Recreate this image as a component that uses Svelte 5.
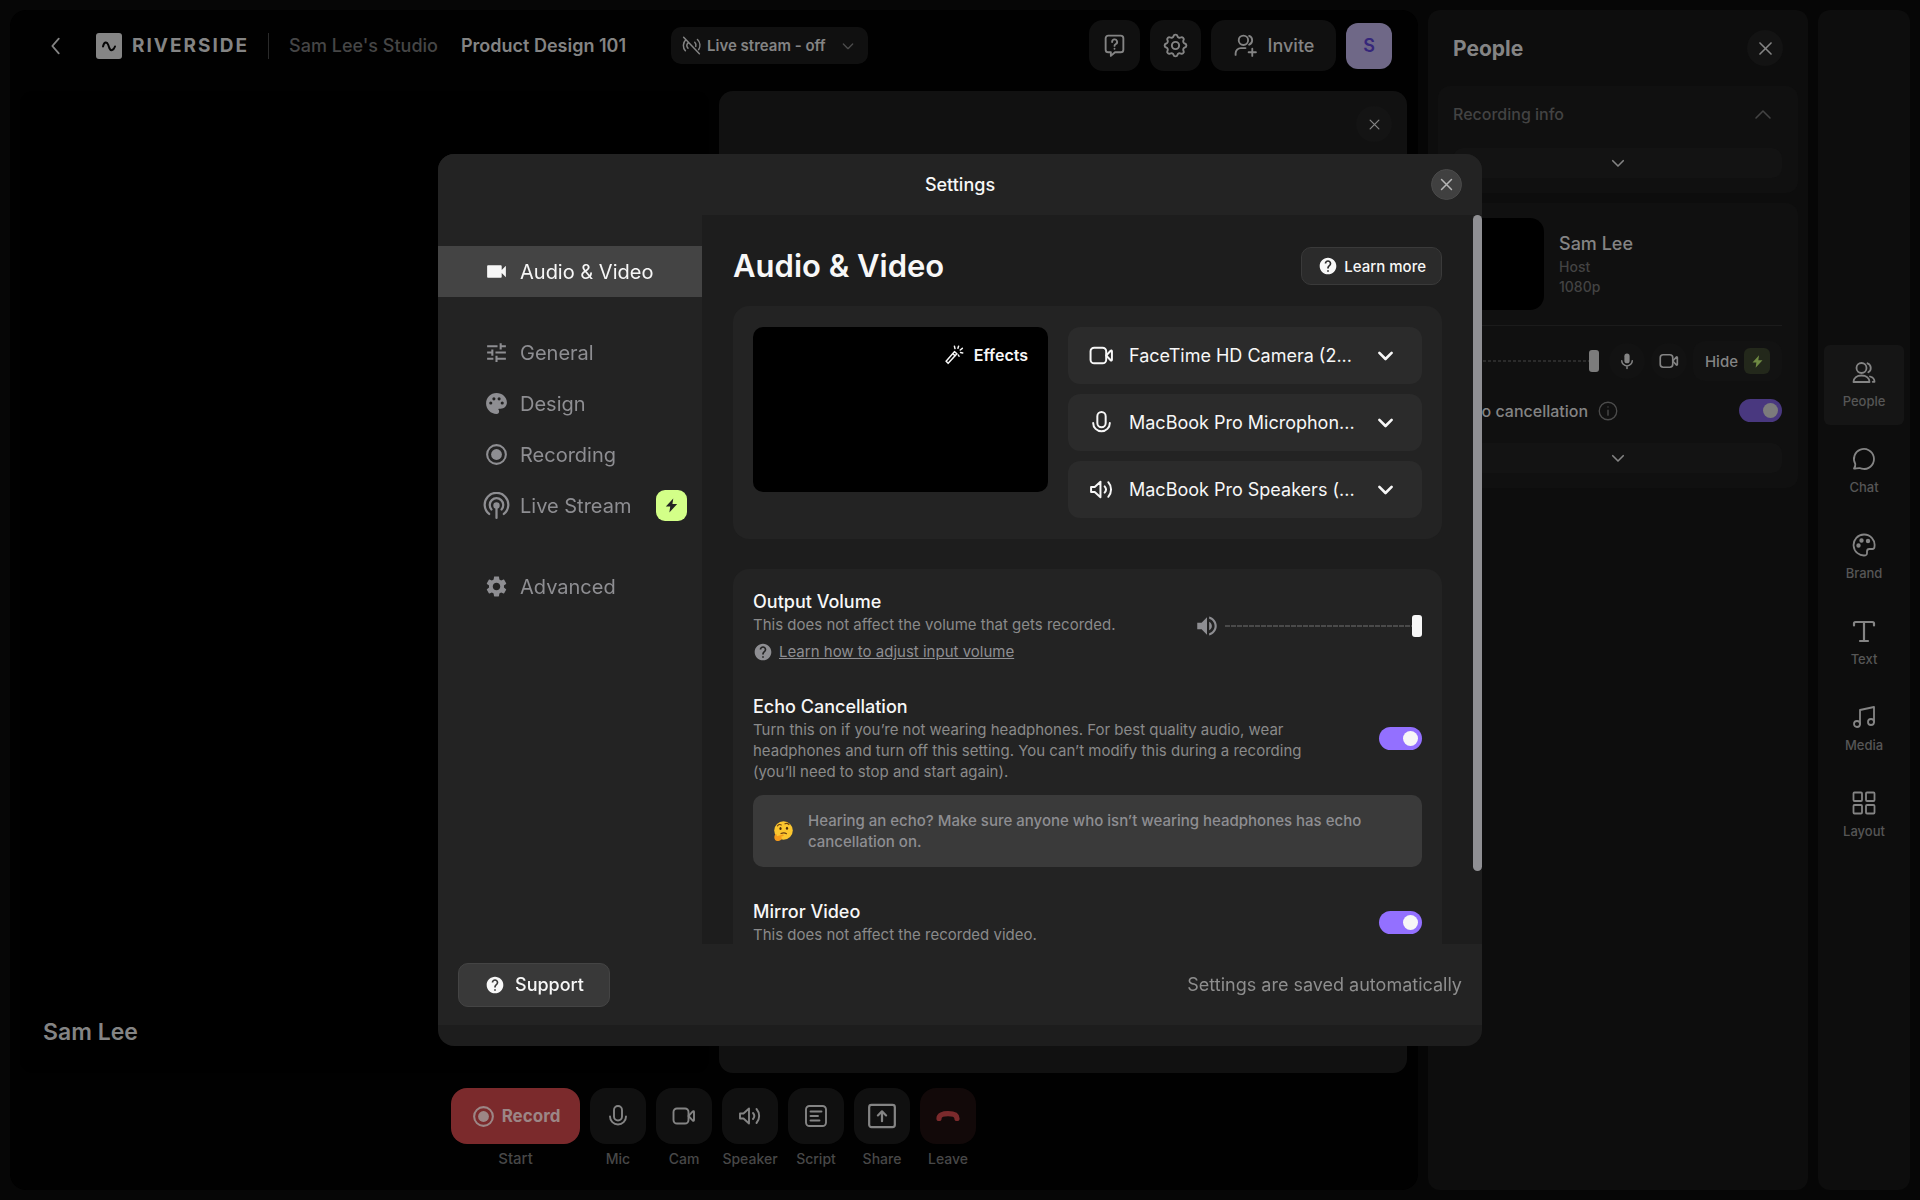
<script lang="ts">
    type NavItem = { icon: string; label: string; pro?: boolean };
    type Device = { icon: string; label: string; value: string };

    // Filled glyphs, 24px grid
    const solid: Record<string, string> = {
        videocam: `<path d="M17 10.5V7c0-.55-.45-1-1-1H4c-.55 0-1 .45-1 1v10c0 .55.45 1 1 1h12c.55 0 1-.45 1-1v-3.5l4 4v-11l-4 4z"/>`,
        tune: `<path d="M3 17v2h6v-2H3zM3 5v2h10V5H3zm10 16v-2h8v-2h-8v-2h-2v6h2zM7 9v2H3v2h4v2h2V9H7zm14 4v-2H11v2h10zm-6-4h2V7h4V5h-4V3h-2v6z"/>`,
        palette: `<path d="M12 2C6.49 2 2 6.49 2 12s4.49 10 10 10a2.5 2.5 0 0 0 2.5-2.5c0-.61-.23-1.2-.64-1.67a.53.53 0 0 1-.13-.33c0-.28.22-.5.5-.5H16c3.31 0 6-2.69 6-6 0-4.96-4.49-9-10-9zm-5.500 11a1.500 1.500 0 1 1 0-3 1.500 1.500 0 0 1 0 3zm3-4a1.500 1.500 0 1 1 0-3 1.500 1.500 0 0 1 0 3zm5 0a1.500 1.500 0 1 1 0-3 1.500 1.500 0 0 1 0 3zm3 4a1.500 1.500 0 1 1 0-3 1.500 1.500 0 0 1 0 3z"/>`,
        record: `<circle cx="12" cy="12" r="5.200"/><circle cx="12" cy="12" r="9" fill="none" stroke="currentColor" stroke-width="2"/>`,
        gear: `<path d="M19.14 12.94c.04-.3.06-.61.06-.94 0-.32-.02-.64-.07-.94l2.03-1.58c.18-.14.23-.41.12-.61l-1.92-3.32c-.12-.22-.37-.29-.59-.22l-2.39.96c-.5-.38-1.03-.7-1.62-.94l-.36-2.54c-.04-.24-.24-.41-.48-.41h-3.84c-.24 0-.43.17-.47.41l-.36 2.54c-.59.24-1.13.57-1.62.94l-2.39-.96c-.22-.08-.47 0-.59.22L2.74 8.87c-.12.21-.08.47.12.61l2.03 1.58c-.05.3-.09.63-.09.94s.02.64.07.94l-2.03 1.58c-.18.14-.23.41-.12.61l1.92 3.32c.12.22.37.29.59.22l2.39-.96c.5.38 1.03.7 1.62.94l.36 2.54c.05.24.24.41.48.41h3.84c.24 0 .44-.17.47-.41l.36-2.54c.59-.24 1.13-.56 1.62-.94l2.39.96c.22.08.47 0 .59-.22l1.92-3.32c.12-.22.07-.47-.12-.61l-2.01-1.58zM12 15.600c-1.980 0-3.600-1.620-3.600-3.600s1.620-3.600 3.600-3.600 3.600 1.620 3.600 3.600-1.620 3.600-3.600 3.600z"/>`,
        help: `<path d="M12 2C6.48 2 2 6.48 2 12s4.48 10 10 10 10-4.48 10-10S17.52 2 12 2zm1 17h-2v-2h2v2zm2.07-7.75l-.9.92C13.45 12.9 13 13.5 13 15h-2v-.5c0-1.1.45-2.1 1.17-2.83l1.24-1.26c.37-.36.59-.86.59-1.41 0-1.1-.9-2-2-2s-2 .9-2 2H8c0-2.21 1.79-4 4-4s4 1.79 4 4c0 .88-.36 1.68-.93 2.25z"/>`,
        volume: `<path d="M3 9v6h4l5 5V4L7 9H3zm13.500 3c0-1.770-1.020-3.290-2.500-4.030v8.050c1.480-.73 2.500-2.250 2.500-4.020zM14 3.230v2.060c2.890.86 5 3.540 5 6.710s-2.110 5.850-5 6.710v2.060c4.010-.91 7-4.490 7-8.770s-2.990-7.860-7-8.770z"/>`,
        bolt: `<path d="M14.500 2 4 13.500h6.200L9 22l11-12h-6.700z"/>`,
        micSolid: `<rect x="8.500" y="2" width="7" height="13" rx="3.500"/><path d="M5 11.500a7 7 0 0 0 14 0M12 18.500V22" fill="none" stroke="currentColor" stroke-width="2" stroke-linecap="round"/>`,
        hangup: `<path d="M3 14.500c0-3.200 3.800-4.800 9-4.800s9 1.600 9 4.800" fill="none" stroke="currentColor" stroke-width="5.200" stroke-linecap="round"/>`,
    };

    // Outlined glyphs, 24px grid
    const outline: Record<string, string> = {
        back: `<path d="m15 4-7 8 7 8"/>`,
        down: `<path d="m5 9 7 7 7-7"/>`,
        up: `<path d="m5 16 7-7 7 7"/>`,
        close: `<path d="m5 5 14 14M19 5 5 19"/>`,
        liveOff: `<path d="M3 2.500 21 21.500M5.500 5.500a9 9 0 0 0-.5 12.500M8.300 8.500a5 5 0 0 0-.3 6.700M18.800 5.200a9.200 9.200 0 0 1 1.400 11.500M15.700 8.200a5 5 0 0 1 1.200 4.800"/>`,
        ask: `<path d="M6 2.500h12A2.500 2.500 0 0 1 20.500 5v11a2.500 2.500 0 0 1-2.500 2.500h-5.500L8.500 22v-3.500H6A2.500 2.500 0 0 1 3.500 16V5A2.500 2.500 0 0 1 6 2.500z"/><path d="M9.700 8.600a2.400 2.400 0 1 1 3.600 2c-.8.500-1.300.9-1.300 1.800M12 15v.2"/>`,
        cog: `<path d="M10.325 4.317c.426-1.756 2.924-1.756 3.350 0a1.724 1.724 0 0 0 2.573 1.066c1.543-.94 3.310.826 2.370 2.370a1.724 1.724 0 0 0 1.065 2.572c1.756.426 1.756 2.924 0 3.350a1.724 1.724 0 0 0-1.066 2.573c.94 1.543-.826 3.310-2.370 2.370a1.724 1.724 0 0 0-2.572 1.065c-.426 1.756-2.924 1.756-3.350 0a1.724 1.724 0 0 0-2.573-1.066c-1.543.94-3.310-.826-2.370-2.370a1.724 1.724 0 0 0-1.065-2.572c-1.756-.426-1.756-2.924 0-3.350a1.724 1.724 0 0 0 1.066-2.573c-.94-1.543.826-3.310 2.370-2.370 1 .608 2.296.070 2.572-1.065z"/><circle cx="12" cy="12" r="3"/>`,
        invite: `<circle cx="10" cy="7" r="4.500"/><path d="M2.500 21v-1.500a5 5 0 0 1 5-5H12M15.500 2.800a4.500 4.500 0 0 1 0 8.400M18.500 15v7M15 18.500h7"/>`,
        mic: `<rect x="8" y="2" width="8" height="14.500" rx="4"/><path d="M4 12.500a8 8 0 0 0 16 0"/>`,
        camera: `<rect x="1.500" y="4.500" width="15" height="15" rx="3.500"/><path d="m16.500 12 4.300-4.600c.5-.5 1.200-.2 1.200.5v8.200c0 .7-.7 1-1.200.5z"/>`,
        speaker: `<path d="M2 9.500h3.500L11 4.500v15l-5.500-5H2zM15 9a4.500 4.500 0 0 1 0 6M18.500 5a10.500 10.500 0 0 1 0 14"/>`,
        script: `<rect x="2" y="2" width="20" height="20" rx="3.500"/><path d="M6.500 7.500h11M6.500 12h7.500M6.500 16.500h9"/>`,
        share: `<rect x="1" y="2.500" width="22" height="19" rx="2"/><path d="M12 16.500v-8M8.500 11.500 12 8l3.500 3.500"/>`,
        info: `<circle cx="12" cy="12" r="10.500"/><path d="M12 11v6M12 7v.3"/>`,
        people: `<circle cx="9.500" cy="7" r="5"/><path d="M1.500 21c0-4 3.500-6.500 8-6.500s8 2.500 8 6.500zM15.500 2.300a5 5 0 0 1 .8 9M18 15.500c2.800.7 4.500 2.500 4.500 5.300h-1.800"/>`,
        chat: `<path d="M2 21.500c1-1.500 1.500-3 1.300-4.500A10 10 0 1 1 12.500 22c-1.800 0-3-.6-4.500-.8-2-.2-4 .3-6 .3z"/>`,
        brand: `<path d="M12 1.500a10.500 10.500 0 1 0 1.500 20.900c1.600-.2 1.500-1.500 1.500-2.400v-1.500c0-1.500.8-2.500 2.300-2.500h3c1.300 0 2.200-.6 2.200-2.500a10.500 10.500 0 0 0-10.500-12z"/><g fill="currentColor"><circle cx="6.500" cy="12.500" r="1.300"/><circle cx="9.500" cy="7.500" r="1.300"/><circle cx="16" cy="8" r="1.300"/></g>`,
        text: `<path d="M2 6.500V4.500A1.500 1.500 0 0 1 3.500 3h17A1.500 1.500 0 0 1 22 4.500v2M12 3v19M8 22h8" stroke-width="2.200"/>`,
        media: `<path d="M8 19V5l14-3v15"/><circle cx="5" cy="19" r="3"/><circle cx="19" cy="17" r="3"/>`,
        layout: `<rect x="1.500" y="1.500" width="8.500" height="8.500" rx="1"/><rect x="14" y="1.500" width="8.500" height="8.500" rx="1"/><rect x="1.500" y="14" width="8.500" height="8.500" rx="1"/><rect x="14" y="14" width="8.500" height="8.500" rx="1"/>`,
        wand: `<path d="m2.500 19.500 10-11.500 3 2.500-10.500 11.500zM10.500 10.300l3 2.700M12.500 1.500l.7 2.800M17.500 1.500 16.700 4M22 4l-2.500 2M22.500 9.500 19.800 9M18 13.500l-.8-1.500"/>`,
        live: `<g stroke-width="2"><path d="M5.500 19.500a10.500 10.500 0 1 1 13 0M7.500 15.500a6 6 0 1 1 9 0M12 12.500V23"/></g><circle cx="12" cy="12" r="2" fill="currentColor"/>`,
    };

    const navGroups: NavItem[][] = [
        [{ icon: "videocam", label: "Audio & Video" }],
        [
            { icon: "tune", label: "General" },
            { icon: "palette", label: "Design" },
            { icon: "record", label: "Recording" },
            { icon: "live", label: "Live Stream", pro: true },
        ],
        [{ icon: "gear", label: "Advanced" }],
    ];

    const devices: Device[] = [
        { icon: "camera", label: "Camera", value: "FaceTime HD Camera (2..." },
        { icon: "mic", label: "Microphone", value: "MacBook Pro Microphon..." },
        { icon: "speaker", label: "Speaker", value: "MacBook Pro Speakers (..." },
    ];

    const controls = [
        { icon: "mic", label: "Mic" },
        { icon: "camera", label: "Cam" },
        { icon: "speaker", label: "Speaker" },
        { icon: "script", label: "Script" },
        { icon: "share", label: "Share" },
        { icon: "hangup", label: "Leave" },
    ];

    const tabs = [
        { icon: "people", label: "People" },
        { icon: "chat", label: "Chat" },
        { icon: "brand", label: "Brand" },
        { icon: "text", label: "Text" },
        { icon: "media", label: "Media" },
        { icon: "layout", label: "Layout" },
    ];

    let activeNav = $state("Audio & Video");
    let activeTab = $state("People");
    let volume = $state(100);
    let guestVolume = $state(100);
    let echo = $state(true);
    let mirror = $state(true);
    let guestEcho = $state(true);
</script>

{#snippet icon(name: string, size: number, weight = 1.7)}
    {#if solid[name]}
        <svg class="icon" width={size} height={size} viewBox="0 0 24 24" fill="currentColor" aria-hidden="true">
            {@html solid[name]}
        </svg>
    {:else}
        <svg
            class="icon"
            width={size}
            height={size}
            viewBox="0 0 24 24"
            fill="none"
            stroke="currentColor"
            stroke-width={weight}
            stroke-linecap="round"
            stroke-linejoin="round"
            aria-hidden="true"
        >
            {@html outline[name]}
        </svg>
    {/if}
{/snippet}

<div class="app">
    <main class="stage">
        <header class="topbar">
            <button class="back" aria-label="Back">{@render icon("back", 22, 2)}</button>
            <a class="brand" href="#home">
                <svg width="26" height="26" viewBox="0 0 26 26" aria-hidden="true">
                    <rect width="26" height="26" rx="3" fill="#858585" />
                    <path d="M7 13.500c1-4.500 3.800-5.500 5.300-1.500l1 3c1.500 3.500 4.200 2.500 5.700-1.500" fill="none" stroke="#050505" stroke-width="2" stroke-linecap="round" />
                </svg>
                <span class="brand-name">RIVERSIDE</span>
            </a>
            <span class="rule"></span>
            <a class="crumb" href="#studio">Sam Lee's Studio</a>
            <span class="session">Product Design 101</span>
            <button class="live-pill">
                {@render icon("liveOff", 21)}
                <span>Live stream - off</span>
                <span class="live-arrow">{@render icon("down", 16, 2)}</span>
            </button>
            <div class="top-actions">
                <button class="tile-btn" aria-label="Help">{@render icon("ask", 25, 1.8)}</button>
                <button class="tile-btn" aria-label="Settings">{@render icon("cog", 29, 1.6)}</button>
                <button class="tile-btn invite">
                    {@render icon("invite", 25, 1.8)}
                    <span>Invite</span>
                </button>
                <button class="avatar">S</button>
            </div>
        </header>

        <div class="videos">
            <div class="video video-self">
                <span class="video-name">Sam Lee</span>
            </div>
            <div class="video video-empty">
                <button class="video-close" aria-label="Close">{@render icon("close", 15, 2)}</button>
            </div>
        </div>

        <footer class="controls">
            <div class="control">
                <button class="record">
                    {@render icon("record", 25)}
                    <span>Record</span>
                </button>
                <span class="control-label start">Start</span>
            </div>
            {#each controls as c}
                <div class="control">
                    <button class="control-btn" class:leave={c.icon === "hangup"} aria-label={c.label}>
                        {@render icon(c.icon, c.icon === "share" ? 28 : 24, 1.9)}
                    </button>
                    <span class="control-label">{c.label}</span>
                </div>
            {/each}
        </footer>
    </main>

    <aside class="people">
        <header class="people-head">
            <h2>People</h2>
            <button class="people-close" aria-label="Close panel">{@render icon("close", 19, 2)}</button>
        </header>
        <section class="people-card info-card">
            <div class="info-head">
                <span>Recording info</span>
                {@render icon("up", 24, 1.6)}
            </div>
            <button class="expand" aria-label="Expand info">{@render icon("down", 18, 2.2)}</button>
        </section>
        <section class="people-card">
            <div class="person">
                <div class="person-thumb"></div>
                <div class="person-text">
                    <strong>Sam Lee</strong>
                    <span>Host</span>
                    <span>1080p</span>
                </div>
            </div>
            <div class="person-controls">
                <input class="range dim" type="range" aria-label="Guest volume" bind:value={guestVolume} />
                <button class="round" aria-label="Mute">{@render icon("micSolid", 18)}</button>
                <button class="round" aria-label="Stop video">{@render icon("camera", 20, 2)}</button>
                <button class="hide-btn">
                    <span>Hide</span>
                    <span class="hide-badge">{@render icon("bolt", 15)}</span>
                </button>
            </div>
            <div class="person-echo">
                <label for="guest-echo">Echo cancellation</label>
                {@render icon("info", 20, 1.6)}
                <input id="guest-echo" class="toggle dim" type="checkbox" bind:checked={guestEcho} />
            </div>
            <button class="expand" aria-label="Expand guest">{@render icon("down", 18, 2.2)}</button>
        </section>
    </aside>

    <nav class="rail">
        {#each tabs as t}
            <button class="rail-item" class:active={activeTab === t.label} onclick={() => (activeTab = t.label)}>
                {@render icon(t.icon, 24, 1.8)}
                <span>{t.label}</span>
            </button>
        {/each}
    </nav>
</div>

<div class="overlay">
    <div class="modal" role="dialog" aria-labelledby="modal-title">
        <header class="modal-head">
            <h1 id="modal-title">Settings</h1>
            <button class="modal-close" aria-label="Close settings">{@render icon("close", 17, 2.2)}</button>
        </header>

        <div class="modal-body">
            <nav class="side">
                {#each navGroups as group}
                    <div class="side-group">
                        {#each group as item}
                            <button class="side-item" class:active={activeNav === item.label} onclick={() => (activeNav = item.label)}>
                                <span class="side-icon">{@render icon(item.icon, item.icon === "live" ? 27 : 25)}</span>
                                <span>{item.label}</span>
                                {#if item.pro}
                                    <span class="pro">{@render icon("bolt", 17)}</span>
                                {/if}
                            </button>
                        {/each}
                    </div>
                {/each}
            </nav>

            <div class="content">
                <div class="content-head">
                    <h2>Audio &amp; Video</h2>
                    <button class="learn">
                        {@render icon("help", 20)}
                        <span>Learn more</span>
                    </button>
                </div>

                <section class="card devices">
                    <div class="preview">
                        <button class="effects">
                            {@render icon("wand", 20, 1.8)}
                            <span>Effects</span>
                        </button>
                    </div>
                    <div class="device-list">
                        {#each devices as d}
                            <label class="device">
                                {@render icon(d.icon, 25, 1.9)}
                                <select aria-label={d.label}>
                                    <option>{d.value}</option>
                                </select>
                                {@render icon("down", 21, 3)}
                            </label>
                        {/each}
                    </div>
                </section>

                <section class="card options">
                    <div class="option">
                        <div class="option-text">
                            <label for="volume">Output Volume</label>
                            <p>This does not affect the volume that gets recorded.</p>
                            <div class="hint">
                                {@render icon("help", 20)}
                                <a href="#volume-help">Learn how to adjust input volume</a>
                            </div>
                        </div>
                        <div class="volume">
                            {@render icon("volume", 26)}
                            <input id="volume" class="range" type="range" bind:value={volume} />
                        </div>
                    </div>

                    <div class="option">
                        <div class="option-text">
                            <label for="echo">Echo Cancellation</label>
                            <p>Turn this on if you’re not wearing headphones. For best quality audio, wear headphones and turn off this setting. You can’t modify this during a recording (you’ll need to stop and start again).</p>
                        </div>
                        <input id="echo" class="toggle" type="checkbox" bind:checked={echo} />
                    </div>

                    <div class="notice">
                        <svg width="20" height="20" viewBox="0 0 20 20" role="img" aria-label="Thinking face">
                            <circle cx="10.500" cy="9.500" r="9.300" fill="#fbc62f" />
                            <path d="M4.500 4.800c1-1.300 2.500-1.500 3.800-.9M12 2.800c1.500-.8 3-.4 4 .8M8 12.600c2-1 4-.9 5.500.1" fill="none" stroke="#6b3f12" stroke-width="1.100" stroke-linecap="round" />
                            <ellipse cx="7.500" cy="7.600" rx="1.100" ry="1.500" fill="#4a2a0c" />
                            <ellipse cx="14" cy="7.200" rx="1.100" ry="1.500" fill="#4a2a0c" />
                            <path d="M2.200 19c-1.200-1.500-1.200-4 0-5.600.5-.7 1.500-.4 1.500.5l.2 1.300 5.800-1.700c1.200-.2 1.500 1.200.4 1.600l-2.600 1c1.500.1 1.600 1.400.8 2.400-1.400 1.700-4.600 2.200-6.100.5z" fill="#f59a1b" />
                        </svg>
                        <p>Hearing an echo? Make sure anyone who isn’t wearing headphones has echo cancellation on.</p>
                    </div>

                    <div class="option">
                        <div class="option-text">
                            <label for="mirror">Mirror Video</label>
                            <p>This does not affect the recorded video.</p>
                        </div>
                        <input id="mirror" class="toggle" type="checkbox" bind:checked={mirror} />
                    </div>
                </section>
            </div>
            <div class="scrollbar"><div class="thumb"></div></div>
        </div>

        <footer class="modal-foot">
            <button class="support">
                {@render icon("help", 20)}
                <span>Support</span>
            </button>
            <p>Settings are saved automatically</p>
        </footer>
    </div>
</div>

<style>
    :global(body) {
        margin: 0;
        background: #060606;
        font-family: Inter, "Liberation Sans", sans-serif;
    }

    :global(*) {
        box-sizing: border-box;
    }

    button,
    select,
    input {
        margin: 0;
        padding: 0;
        border: 0;
        background: none;
        color: inherit;
        font: inherit;
    }

    h1,
    h2,
    p {
        margin: 0;
    }

    a {
        color: inherit;
        text-decoration: none;
    }

    .icon {
        display: block;
        flex: none;
    }

    .app {
        display: flex;
        gap: 10px;
        min-height: 100vh;
        padding: 10px;
        color: #848484;
    }

    /* Stage */
    .stage {
        flex: 1;
        display: flex;
        flex-direction: column;
        min-width: 0;
        padding: 0 11px 0 10px;
        border-radius: 16px;
        background: #010101;
    }

    .topbar {
        display: flex;
        align-items: center;
        height: 71px;
        margin-bottom: 10px;
        padding: 0 15px 0 25px;
        font-size: 18px;
    }

    .back {
        width: 22px;
        margin-right: 29px;
    }

    .brand {
        display: flex;
        align-items: center;
        gap: 10px;
    }

    .brand-name {
        font-size: 19px;
        font-weight: 700;
        letter-spacing: 2px;
    }

    .rule {
        width: 1px;
        height: 26px;
        margin: 0 20px 0 19px;
        background: #2a2a2a;
    }

    .crumb {
        margin-right: 23px;
        color: #464646;
        font-weight: 500;
    }

    .session {
        font-weight: 600;
    }

    .live-pill {
        display: flex;
        align-items: center;
        gap: 5px;
        height: 37px;
        margin-left: 45px;
        padding: 0 12px 0 10px;
        border-radius: 10px;
        background: #101010;
        font-size: 15px;
        font-weight: 600;
    }

    .live-arrow {
        margin-left: 9px;
        color: #4c4c4c;
    }

    .top-actions {
        display: flex;
        align-items: center;
        gap: 10px;
        margin-left: auto;
    }

    .tile-btn {
        display: flex;
        align-items: center;
        justify-content: center;
        gap: 10px;
        width: 51px;
        height: 51px;
        border-radius: 14px;
        background: #101010;
    }

    .invite {
        width: 125px;
        font-weight: 500;
    }

    .avatar {
        width: 46px;
        height: 46px;
        border-radius: 12px;
        background: #6f6887;
        color: #35267a;
        font-weight: 600;
    }

    .videos {
        flex: 1;
        display: grid;
        grid-template-columns: 1fr 1fr;
        gap: 10px;
    }

    .video {
        display: flex;
        border-radius: 14px;
        background: #000;
    }

    .video-self {
        align-items: flex-end;
        padding: 0 23px 27px;
    }

    .video-name {
        font-size: 23px;
        font-weight: 600;
        line-height: 28px;
    }

    .video-empty {
        align-items: flex-start;
        justify-content: flex-end;
        padding: 15px;
        background: #111;
    }

    .video-close {
        display: grid;
        place-items: center;
        width: 36px;
        height: 36px;
        border-radius: 50%;
        background: #141414;
    }

    .controls {
        display: flex;
        justify-content: center;
        gap: 10px;
        padding: 15px 0 22px;
    }

    .control {
        display: flex;
        flex-direction: column;
        align-items: center;
        gap: 6px;
    }

    .control-btn,
    .record {
        display: flex;
        align-items: center;
        justify-content: center;
        width: 56px;
        height: 56px;
        border-radius: 16px;
        background: #101010;
    }

    .record {
        gap: 6px;
        width: 129px;
        background: #7b2a2c;
        color: #9c8686;
        font-size: 17px;
        font-weight: 700;
    }

    .leave {
        background: #120909;
        color: #7b2a2c;
    }

    .control-label {
        display: flex;
        justify-content: center;
        width: 56px;
        color: #484848;
        font-size: 14px;
        font-weight: 500;
        line-height: 18px;
    }

    .control-label.start {
        font-size: 15px;
    }

    /* People panel */
    .people {
        width: 380px;
        padding: 0 10px;
        border-radius: 12px;
        background: #0d0d0d;
    }

    .people-head {
        display: flex;
        align-items: center;
        justify-content: space-between;
        height: 76px;
        padding: 0 15px;
    }

    .people-head h2 {
        font-size: 21px;
        font-weight: 700;
    }

    .people-close {
        display: grid;
        place-items: center;
        width: 36px;
        height: 36px;
        border-radius: 50%;
        background: #131313;
    }

    .people-card {
        margin-bottom: 10px;
        padding: 15px 16px 15px 15px;
        border-radius: 12px;
        background: #101010;
    }

    .info-card {
        padding-top: 14px;
    }

    .info-head {
        display: flex;
        align-items: center;
        justify-content: space-between;
        height: 28px;
        margin-bottom: 20px;
        padding-right: 7px;
        color: #434343;
        font-size: 16px;
        font-weight: 500;
    }

    .expand {
        display: grid;
        place-items: center;
        width: 100%;
        height: 30px;
        border-radius: 10px;
        background: #131313;
    }

    .person {
        display: flex;
        align-items: center;
        gap: 15px;
        padding-bottom: 15px;
        border-bottom: 1px solid #1b1b1b;
    }

    .person-thumb {
        width: 91px;
        height: 92px;
        border-radius: 14px;
        background: #000;
    }

    .person-text {
        display: flex;
        flex-direction: column;
        color: #434343;
        font-size: 14px;
        font-weight: 500;
        line-height: 20px;
    }

    .person-text strong {
        color: #848484;
        font-size: 18px;
        font-weight: 500;
        line-height: 26px;
    }

    .person-controls {
        display: flex;
        align-items: center;
        gap: 6px;
        margin: 15px 0 18px;
    }

    .person-controls .range {
        flex: 1;
        min-width: 0;
        margin-right: 4px;
    }

    .round {
        display: grid;
        place-items: center;
        width: 36px;
        height: 36px;
        border-radius: 50%;
        background: #121212;
    }

    .hide-btn {
        display: flex;
        align-items: center;
        gap: 6px;
        height: 40px;
        padding: 0 12px;
        border-radius: 12px;
        background: #121212;
        font-size: 15px;
        font-weight: 500;
    }

    .hide-badge {
        display: grid;
        place-items: center;
        width: 26px;
        height: 26px;
        border-radius: 6px;
        background: #23281b;
        color: #6f8a43;
    }

    .person-echo {
        display: flex;
        align-items: center;
        gap: 10px;
        margin-bottom: 21px;
        font-size: 16px;
        font-weight: 500;
    }

    .person-echo .icon {
        color: #4c4c4c;
    }

    .person-echo .toggle {
        margin-left: auto;
    }

    /* Right rail */
    .rail {
        display: flex;
        flex-direction: column;
        align-items: center;
        justify-content: center;
        gap: 6px;
        width: 92px;
        border-radius: 12px;
        background: #0d0d0d;
    }

    .rail-item {
        display: flex;
        flex-direction: column;
        align-items: center;
        justify-content: center;
        gap: 7px;
        width: 80px;
        height: 80px;
        border-radius: 6px;
        color: #848484;
    }

    .rail-item span {
        color: #565656;
        font-size: 13px;
        font-weight: 500;
        line-height: 18px;
    }

    .rail-item.active {
        background: #151515;
    }

    /* Modal */
    .overlay {
        position: fixed;
        inset: 0;
        display: grid;
        place-items: center;
    }

    .modal {
        display: flex;
        flex-direction: column;
        width: min(1044px, calc(100vw - 48px));
        height: calc(100vh - 308px);
        padding-bottom: 21px;
        border-radius: 16px;
        background: #1d1d1d;
        color: #f7f7f7;
        overflow: hidden;
    }

    .modal-head {
        display: grid;
        grid-template-columns: 1fr auto 1fr;
        align-items: center;
        flex: none;
        height: 61px;
        padding: 0 20px;
        background: #232323;
    }

    .modal-head h1 {
        grid-column: 2;
        font-size: 18px;
        font-weight: 500;
    }

    .modal-close {
        display: grid;
        place-items: center;
        justify-self: end;
        width: 31px;
        height: 31px;
        border: 1px solid #4a4a4a;
        border-radius: 50%;
        background: #404040;
        color: #b5b5b5;
    }

    .modal-body {
        flex: 1;
        display: flex;
        min-height: 0;
    }

    .side {
        display: flex;
        flex-direction: column;
        gap: 30px;
        width: 264px;
        padding-top: 31px;
        background: #232323;
        color: #8e8e92;
    }

    .side-item {
        display: flex;
        align-items: center;
        gap: 10px;
        width: 100%;
        height: 51px;
        padding: 0 15px 0 45px;
        font-size: 20px;
    }

    .side-item.active {
        background: #444;
        color: #f7f7f7;
    }

    .side-icon {
        display: grid;
        place-items: center;
        width: 27px;
    }

    .pro {
        display: grid;
        place-items: center;
        width: 31px;
        height: 31px;
        margin-left: auto;
        border-radius: 9px;
        background: #d3ff88;
        color: #232323;
    }

    .content {
        flex: 1;
        min-width: 0;
        padding: 0 31px;
        overflow: hidden auto;
        scrollbar-width: none;
    }

    .content-head {
        display: flex;
        align-items: center;
        justify-content: space-between;
        padding: 32px 0 21px;
    }

    .content-head h2 {
        font-size: 31px;
        font-weight: 600;
        line-height: 38px;
    }

    .learn {
        display: flex;
        align-items: center;
        gap: 6px;
        height: 38px;
        padding: 0 15px 0 16px;
        border: 1px solid #3a3a3a;
        border-radius: 10px;
        background: #2b2b2b;
        font-size: 15px;
        font-weight: 500;
    }

    .card {
        padding: 21px 20px;
        border-radius: 16px;
        background: #232323;
    }

    .devices {
        display: flex;
        align-items: flex-start;
        gap: 20px;
        margin-bottom: 30px;
    }

    .preview {
        display: flex;
        align-items: flex-start;
        justify-content: flex-end;
        width: 295px;
        height: 165px;
        padding: 10px;
        border-radius: 10px;
        background: #000;
    }

    .effects {
        display: flex;
        align-items: center;
        gap: 10px;
        height: 36px;
        padding: 0 10px;
        font-size: 16px;
        font-weight: 600;
    }

    .device-list {
        flex: 1;
        display: flex;
        flex-direction: column;
        gap: 10px;
        min-width: 0;
    }

    .device {
        display: flex;
        align-items: center;
        gap: 15px;
        height: 57px;
        padding: 0 26px 0 21px;
        border-radius: 12px;
        background: #2b2b2b;
    }

    .device select {
        flex: 1;
        min-width: 0;
        appearance: none;
        outline: 0;
        font-size: 18px;
    }

    .options {
        display: flex;
        flex-direction: column;
        gap: 33px;
    }

    .option {
        display: flex;
        align-items: center;
        justify-content: space-between;
        gap: 40px;
    }

    .option-text {
        max-width: 580px;
        color: #8a8a8a;
        font-size: 15px;
        line-height: 21px;
    }

    .option-text label {
        display: block;
        color: #f7f7f7;
        font-size: 18px;
        font-weight: 500;
        line-height: 24px;
    }

    .hint {
        display: flex;
        align-items: center;
        gap: 6px;
        margin-top: 6px;
        color: #8e8e92;
    }

    .hint a {
        text-decoration: underline;
    }

    .volume {
        display: flex;
        align-items: center;
        gap: 5px;
        color: #8e8e92;
    }

    .volume .range {
        width: 197px;
    }

    .range {
        height: 24px;
        appearance: none;
    }

    .range::-webkit-slider-runnable-track {
        height: 22px;
        background: repeating-linear-gradient(90deg, #4a4a4a 0 5px, transparent 5px 6px) center / 100% 2px no-repeat;
    }

    .range::-webkit-slider-thumb {
        appearance: none;
        width: 10px;
        height: 22px;
        border-radius: 3px;
        background: #f7f7f7;
    }

    .range.dim::-webkit-slider-runnable-track {
        background: repeating-linear-gradient(90deg, #2a2a2a 0 3px, transparent 3px 5px) center / 100% 2px no-repeat;
    }

    .range.dim::-webkit-slider-thumb {
        background: #7c7c7c;
    }

    .toggle {
        flex: none;
        display: flex;
        align-items: center;
        width: 43px;
        height: 23px;
        padding: 0 4px;
        border-radius: 12px;
        background: #444;
        appearance: none;
    }

    .toggle::before {
        content: "";
        width: 15px;
        height: 15px;
        border-radius: 50%;
        background: #f7f7f7;
    }

    .toggle:checked {
        justify-content: flex-end;
        background: #9370ff;
    }

    .toggle.dim:checked {
        background: #49387f;
    }

    .toggle.dim::before {
        background: #7c7c7c;
    }

    .notice {
        display: flex;
        align-items: center;
        gap: 15px;
        margin-top: -20px;
        padding: 15px 20px;
        border-radius: 10px;
        background: #3a3a3a;
        color: #8e8e92;
        font-size: 15px;
        font-weight: 500;
        line-height: 21px;
    }

    .notice svg {
        flex: none;
    }

    .scrollbar {
        width: 9px;
    }

    .thumb {
        height: 90%;
        border-radius: 5px;
        background: #8f8f93;
    }

    .modal-foot {
        display: flex;
        align-items: center;
        justify-content: space-between;
        flex: none;
        height: 81px;
        padding: 0 20px;
        background: #232323;
        color: #8e8e8e;
        font-size: 18px;
    }

    .support {
        display: flex;
        align-items: center;
        gap: 10px;
        height: 44px;
        padding: 0 25px 0 26px;
        border: 1px solid #444;
        border-radius: 10px;
        background: #393939;
        color: #f7f7f7;
        font-weight: 500;
    }
</style>
